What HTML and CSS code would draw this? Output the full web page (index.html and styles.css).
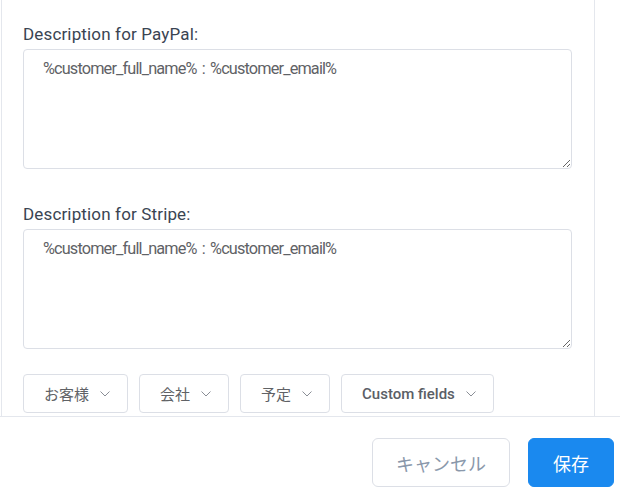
FILE: index.html
```html
<!DOCTYPE html>
<html lang="ja">
<head>
<meta charset="utf-8">
<title>Payment descriptions</title>
<link rel="stylesheet" href="styles.css">
</head>
<body>
<div class="panel">
  <div class="field">
    <label class="label">Description for PayPal:</label>
    <textarea class="input">%customer_full_name% : %customer_email%</textarea>
  </div>
  <div class="field">
    <label class="label">Description for Stripe:</label>
    <textarea class="input">%customer_full_name% : %customer_email%</textarea>
  </div>
  <div class="placeholders">
    <button class="dd">お客様<svg class="chev" viewBox="0 0 10 6"><path d="M0.5 0.5 L5 5 L9.5 0.5" /></svg></button>
    <button class="dd">会社<svg class="chev" viewBox="0 0 10 6"><path d="M0.5 0.5 L5 5 L9.5 0.5" /></svg></button>
    <button class="dd">予定<svg class="chev" viewBox="0 0 10 6"><path d="M0.5 0.5 L5 5 L9.5 0.5" /></svg></button>
    <button class="dd dd-bold">Custom fields<svg class="chev" viewBox="0 0 10 6"><path d="M0.5 0.5 L5 5 L9.5 0.5" /></svg></button>
  </div>
</div>
<div class="footer">
  <button class="btn btn-cancel">キャンセル</button>
  <button class="btn btn-save">保存</button>
</div>
</body>
</html>
```

FILE: styles.css
```css
html, body {
  margin: 0;
  padding: 0;
  background: #ffffff;
}

body {
  font-family: Roboto, "Noto Sans CJK JP", sans-serif;
  width: 620px;
  height: 493px;
  overflow: hidden;
}

.panel {
  box-sizing: border-box;
  width: 594px;
  height: 416px;
  margin-left: 1px;
  border-left: 1px solid #e4e7ed;
  border-right: 1px solid #e4e7ed;
  padding: 22px 21px 0 21px;
  overflow: hidden;
}

.field {
  margin-bottom: 33px;
}

.field + .field {
  margin-bottom: 25px;
}

.label {
  display: block;
  font-size: 17px;
  line-height: 24px;
  letter-spacing: 0.15px;
  color: #3a4452;
  margin-bottom: 3px;
}

.input {
  display: block;
  box-sizing: border-box;
  width: 549px;
  height: 120px;
  margin: 0;
  padding: 7px 19px 5px;
  border: 1px solid #dcdfe6;
  border-radius: 4px;
  font-family: Roboto, "Noto Sans CJK JP", sans-serif;
  font-size: 16.3px;
  letter-spacing: -0.85px;
  word-spacing: 2px;
  line-height: 24px;
  color: #5f6266;
  background: #fff;
  outline: none;
  resize: vertical;
}

.placeholders {
  display: flex;
  gap: 11px;
}

.dd {
  display: flex;
  align-items: center;
  box-sizing: border-box;
  height: 39px;
  padding: 0 17px 0 20px;
  border: 1px solid #dcdfe6;
  border-radius: 4px;
  background: #fff;
  font-family: Roboto, "Noto Sans CJK JP", sans-serif;
  font-size: 15px;
  color: #606266;
  cursor: pointer;
}

.dd-bold {
  font-weight: 500;
  color: #5a5e66;
}

.chev {
  width: 10px;
  height: 6px;
  margin-left: 11px;
  fill: none;
  stroke: #8a8e96;
  stroke-width: 1;
}

.footer {
  display: flex;
  justify-content: flex-end;
  gap: 18px;
  border-top: 1px solid #e4e7ed;
  padding: 21px 6px 0 0;
}

.btn {
  box-sizing: border-box;
  height: 49px;
  border-radius: 6px;
  font-family: Roboto, "Noto Sans CJK JP", sans-serif;
  font-size: 18px;
  cursor: pointer;
}

.btn-cancel {
  width: 138px;
  border: 1px solid #dcdfe6;
  background: #fff;
  color: #8a98ab;
}

.btn-save {
  width: 86px;
  border: 1px solid #1a89ef;
  background: #1a89ef;
  color: #ffffff;
}
```
